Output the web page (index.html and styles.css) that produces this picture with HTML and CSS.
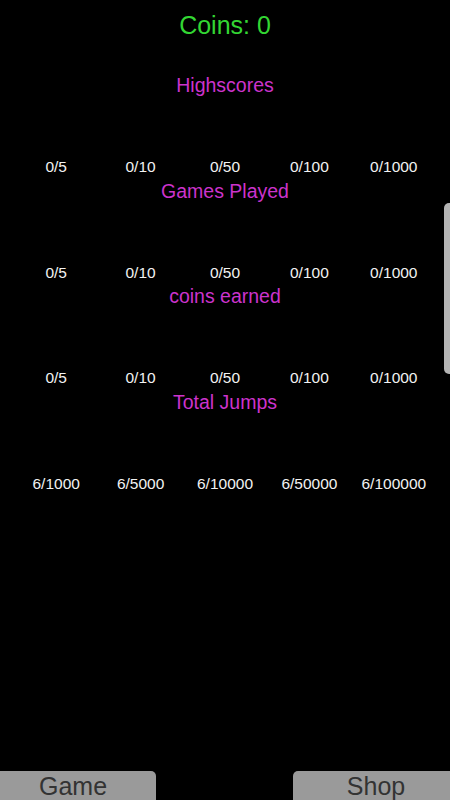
FILE: index.html
```html
<html>
<head>
    <meta charset="utf-8">
    <title>Highscores</title>
    <link rel="stylesheet" href="styles.css">
</head>
<body>
    <div class="screen">
        <div class="coins">Coins: 0</div>

        <div class="section first">
            <div class="title">Highscores</div>
            <div class="goals">
                <span>0/5</span><span>0/10</span><span>0/50</span><span>0/100</span><span>0/1000</span>
            </div>
        </div>
        <div class="section">
            <div class="title">Games Played</div>
            <div class="goals">
                <span>0/5</span><span>0/10</span><span>0/50</span><span>0/100</span><span>0/1000</span>
            </div>
        </div>
        <div class="section">
            <div class="title">coins earned</div>
            <div class="goals">
                <span>0/5</span><span>0/10</span><span>0/50</span><span>0/100</span><span>0/1000</span>
            </div>
        </div>
        <div class="section">
            <div class="title">Total Jumps</div>
            <div class="goals">
                <span>6/1000</span><span>6/5000</span><span>6/10000</span><span>6/50000</span><span>6/100000</span>
            </div>
        </div>

        <div class="nav">
            <div class="btn game">Game</div>
            <div class="btn shop">Shop</div>
        </div>

        <div class="scroll"></div>
    </div>
</body>
</html>
```

FILE: styles.css
```css
* {box-sizing:border-box;}
html, body {margin:0;background:#000;}
body {font-family:"Liberation Sans", Arial, sans-serif;}
.screen {position:relative;width:450px;height:800px;overflow:hidden;display:flex;flex-direction:column;}
.coins {height:50px;line-height:50px;text-align:center;font-size:25px;color:#33d633;}
.section.first {margin-top:23px;}
.title {height:24px;line-height:24px;text-align:center;font-size:19.5px;color:#cc33cc;}
.goals {display:grid;grid-template-columns:repeat(5, 1fr);padding:0 14px;margin-top:58px;height:24px;line-height:24px;}
.goals span {text-align:center;font-size:15.5px;color:#f2f2f2;}
.section + .section .title {margin-top:-0.5px;}
.nav {margin-top:auto;display:flex;justify-content:space-between;height:29px;}
.btn {width:166px;height:29px;line-height:30px;text-align:center;font-size:25px;color:#333;background:#9a9a9a;}
.game {margin-left:-10px;border-radius:0 5px 0 0;}
.shop {margin-right:-9px;border-radius:5px 0 0 0;}
.scroll {position:absolute;right:0;top:203px;width:6px;height:171px;background:#b4b4b4;border-radius:5px 0 0 5px;}
```
